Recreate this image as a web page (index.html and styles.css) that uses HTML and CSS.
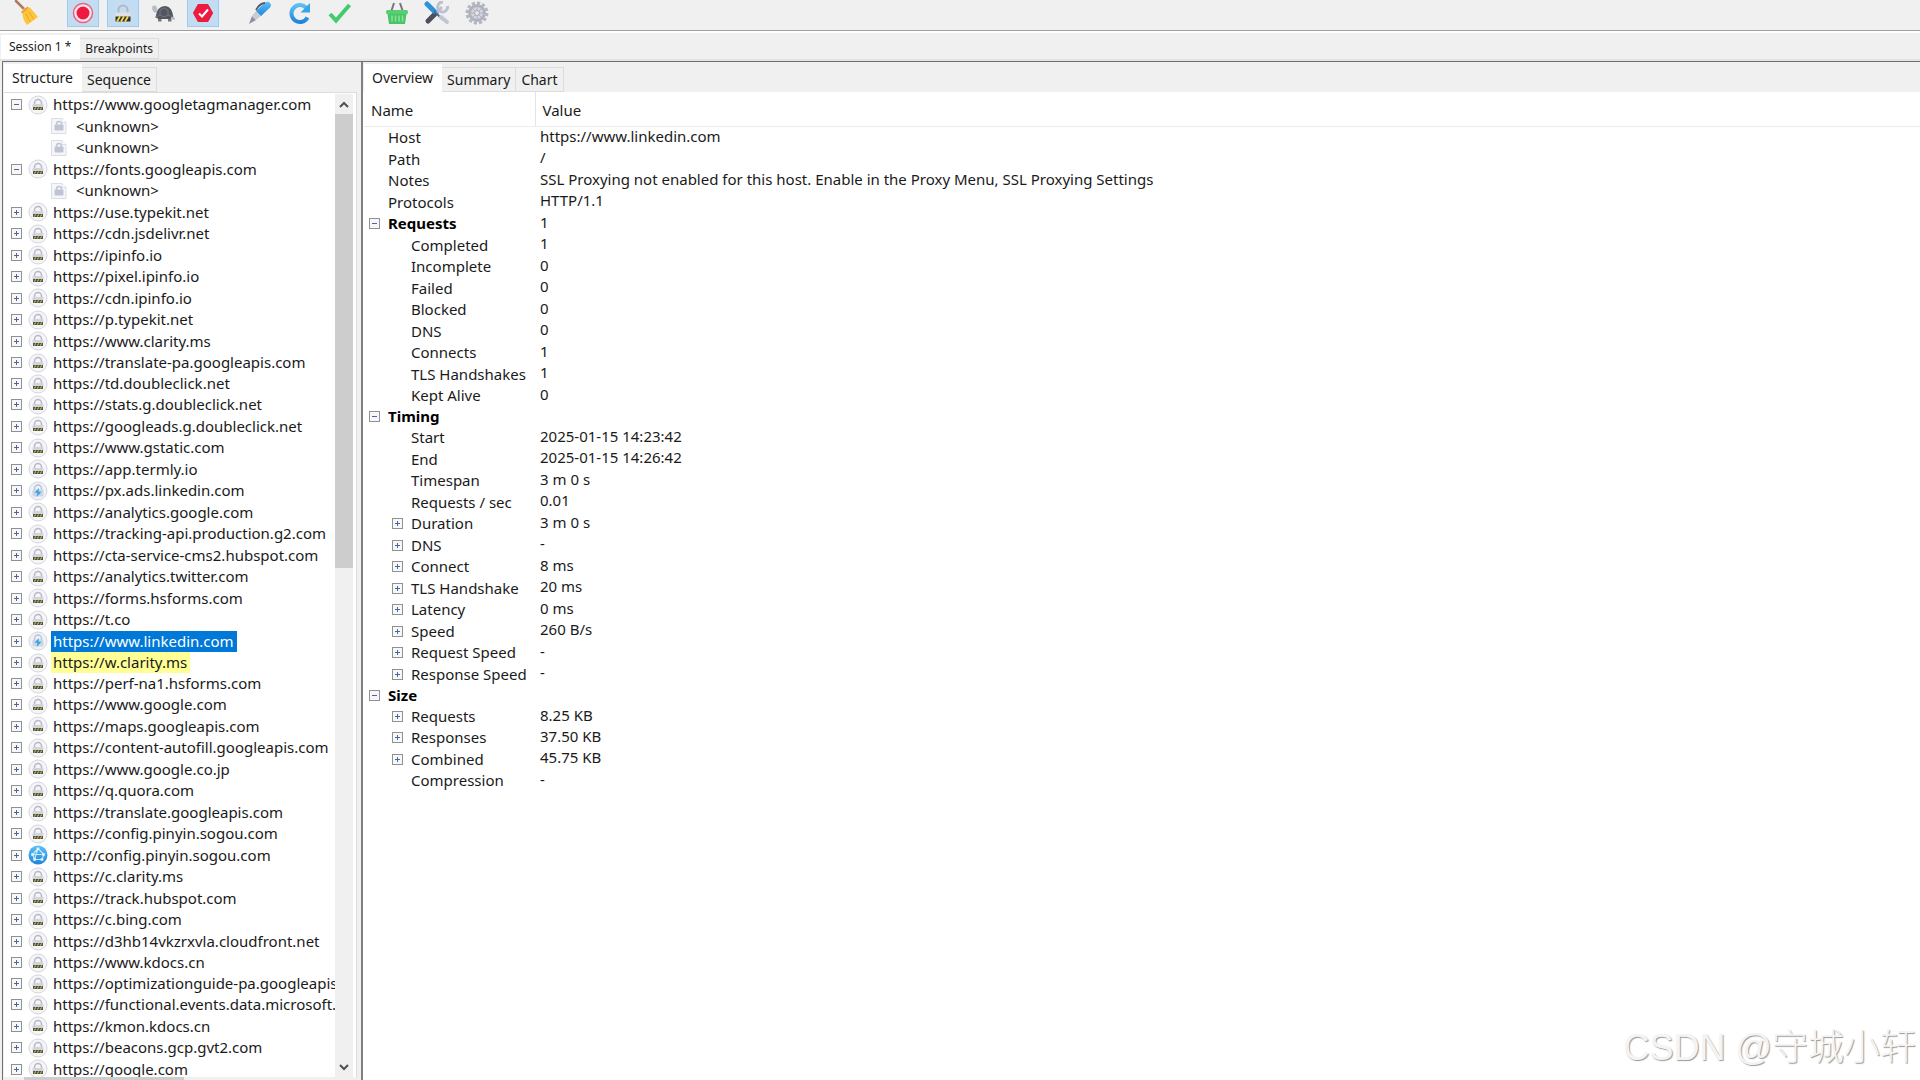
FILE: index.html
```html
<!DOCTYPE html>

<html lang="en">

    <head>
        <meta charset="utf-8">
        <title>Session 1</title>
        <link rel="stylesheet" href="styles.css">
    </head>

    <body>
        <svg class="defs" width="0" height="0">
            <defs>
                <linearGradient id="blue" x1="0" y1="0" x2="0" y2="1">
                    <stop offset="0" stop-color="#5cc0f5"/>
                    <stop offset="1" stop-color="#1f86dc"/>
                </linearGradient>
            </defs>
            <symbol id="host-lock" viewBox="0 0 20 20">
                <circle cx="10" cy="10" r="9" fill="#f5f5f9" stroke="#d5d5e0"/>
                <path d="M6.500 9.500V8a3.500 3.500 0 0 1 7 0v1.500" fill="none" stroke="#b6b9c4" stroke-width="1.500"/>
                <rect x="4.500" y="9" width="11" height="3.500" rx="1" fill="#d2d4dc"/>
                <rect x="5" y="12" width="10" height="3" fill="#55553a"/>
                <path d="M6.500 14.500l1-2M9.500 14.500l1-2M12.500 14.500l1-2" stroke="#e0dc78"/>
            </symbol>
            <symbol id="host-bolt" viewBox="0 0 20 20">
                <circle cx="10" cy="10" r="9" fill="#f1f2f7" stroke="#d3d5e2"/>
                <path d="M6.500 9V7.500a3.500 3.500 0 0 1 7 0V9" fill="none" stroke="#b9c3d2" stroke-width="1.500"/>
                <rect x="4.500" y="8.500" width="11" height="7" rx="1.500" fill="#cdd5e1"/>
                <path d="M11 7l-4.500 4.800h3L8.500 16l5-5.200h-3z" fill="#2ea3ec"/>
            </symbol>
            <symbol id="host-globe" viewBox="0 0 20 20">
                <circle cx="10" cy="10" r="9.500" fill="url(#blue)"/>
                <path d="M10 3.500L4.500 9.500L6.500 14.500H14L16 9.500ZM4.500 9.500H16M10 3.500L6.500 14.500" fill="none" stroke="#c6e8fb" stroke-width="1.200"/>
                <path d="M8.700 2.500h2.600v2.600H8.700zM3.200 8.200h2.600v2.600H3.200zM14.200 8.200h2.600v2.600h-2.600zM5.200 13.200h2.600v2.600H5.200zM12.700 13.200h2.600v2.600h-2.600z" fill="#e4f5ff"/>
            </symbol>
            <symbol id="file-lock" viewBox="0 0 16 16">
                <path d="M.5 .5h10.500l4 4v11H.5z" fill="#f6f6fa" stroke="#dcdce6"/>
                <path d="M11 .5v4h4" fill="#fff" stroke="#dcdce6"/>
                <path d="M5.500 8V6a2.500 2.500 0 0 1 5 0v2" fill="none" stroke="#c0c4d2" stroke-width="1.500"/>
                <rect x="3.500" y="6.500" width="9" height="6" rx="1" fill="#bfc4d3"/>
            </symbol>
        </svg>

        <div class="toolbar">
            <button class="tool" aria-label="Clear session">
                <svg width="26" height="26" viewBox="0 0 26 26">
                    <path d="M3 1L13 11" stroke="#b07a5a" stroke-width="2.500" stroke-linecap="round"/>
                    <path d="M10.500 8.500L17 7.500L25 17L14 25Q9 19 9.500 12Z" fill="#fcc63c"/>
                    <path d="M13 14L17 22M16 12L21 19.500" stroke="#eda628"/>
                    <path d="M8.500 12.500Q12 11 15 7" stroke="#f39a3c" stroke-width="2" fill="none"/>
                </svg>
            </button>
            <div class="tool-group">
                <button class="tool pressed" aria-label="Record">
                    <svg width="22" height="22" viewBox="0 0 22 22">
                        <circle cx="11" cy="11" r="9.500" fill="#fbe8ee" stroke="#f06080" stroke-width="1.500"/>
                        <circle cx="11" cy="11" r="6.500" fill="#f0193f"/>
                    </svg>
                </button>
                <button class="tool pressed" aria-label="SSL proxying">
                    <svg width="18" height="20" viewBox="0 0 18 20">
                        <path d="M4.500 11V7a4.500 4.500 0 0 1 9 0v4" fill="none" stroke="#b4b8c4" stroke-width="2"/>
                        <rect x="1.500" y="9.500" width="15" height="9" rx="1" fill="#dfe1e8"/>
                        <rect x="1.500" y="13.500" width="15" height="5" fill="#303028"/>
                        <path d="M3 18.500l3-5M7 18.500l3-5M11 18.500l3-5" stroke="#f6da4c" stroke-width="1.800"/>
                    </svg>
                </button>
                <button class="tool" aria-label="Throttling">
                    <svg width="24" height="18" viewBox="0 0 24 18">
                        <path d="M7 14v3.500h3.500V14M17 14v3.500h3.500V14" fill="#74777f"/>
                        <path d="M5 8Q3 10 1.500 6Q0 1.500 3.500 1.500Q6 1.500 6 5L8 10z" fill="#b8bcc8"/>
                        <path d="M4.500 13.500Q6 2 14 2Q21 2 22.500 13.500L20 15H8z" fill="#53565e"/>
                        <path d="M9 6l4-2 4 2v5l-4 2-4-2zM4.500 13L9 11M17 11l5 2" fill="none" stroke="#74777f"/>
                        <path d="M20 14l4 1" stroke="#b8bcc8" stroke-width="2"/>
                    </svg>
                </button>
                <button class="tool pressed" aria-label="Breakpoints">
                    <svg width="20" height="20" viewBox="0 0 20 20">
                        <path d="M5.500 2h9L19 10l-4.500 8h-9L1 10z" fill="#ec1c40" stroke="#ec1c40" stroke-width="2" stroke-linejoin="round"/>
                        <path d="M6 10.500l3 3 6-7" fill="none" stroke="#fff" stroke-width="2"/>
                    </svg>
                </button>
            </div>
            <div class="tool-group">
                <button class="tool" aria-label="Compose">
                    <svg width="24" height="24" viewBox="0 0 24 24">
                        <path d="M1 23l3-8 4 4z" fill="#8d92a0"/>
                        <path d="M4 15L8 10l5 5-5 4z" fill="#c8ccd8"/>
                        <path d="M8 10L17 1.500q3-1.500 5 .5t0 4.500L13 15z" fill="url(#blue)"/>
                        <path d="M8 9Q12 2 17 2" fill="none" stroke="#555b68" stroke-width="1.800"/>
                    </svg>
                </button>
                <button class="tool" aria-label="Repeat">
                    <svg width="24" height="24" viewBox="0 0 24 24">
                        <path d="M19.500 16.500A8.500 8.500 0 1 1 18 6.500" fill="none" stroke="url(#blue)" stroke-width="4"/>
                        <path d="M22 2v9.500h-9.500z" fill="#3ba4ea"/>
                    </svg>
                </button>
                <button class="tool" aria-label="Validate">
                    <svg width="24" height="22" viewBox="0 0 24 22">
                        <path d="M2 12l6 6.500L21.500 3" fill="none" stroke="#42cb6c" stroke-width="4"/>
                    </svg>
                </button>
            </div>
            <div class="tool-group">
                <button class="tool" aria-label="Purchase">
                    <svg width="24" height="24" viewBox="0 0 24 24">
                        <path d="M6 11L9 2M18 11L15 2" stroke="#77747a" stroke-width="2"/>
                        <rect x="1" y="9" width="22" height="4" rx="1.500" fill="#55cf70"/>
                        <path d="M2.500 13h19L20 23H4z" fill="#48c665"/>
                        <path d="M7 14.500v6M10.500 14.500v6M14 14.500v6M17.500 14.500v6" stroke="#8be49a" stroke-width="1.500"/>
                    </svg>
                </button>
                <button class="tool" aria-label="Tools">
                    <svg width="26" height="24" viewBox="0 0 26 24">
                        <path d="M4 20l8-8" stroke="#4b4f59" stroke-width="5" stroke-linecap="round"/>
                        <path d="M12 12l6-6" stroke="#bcc1cf" stroke-width="3"/>
                        <path d="M23.500 5A5 5 0 1 1 19 1" fill="none" stroke="#bcc1cf" stroke-width="3"/>
                        <path d="M3 3l7 7" stroke="#2b94dc" stroke-width="5" stroke-linecap="round"/>
                        <path d="M10 10l8 8" stroke="#3d6f98" stroke-width="2"/>
                        <path d="M17 16l6 5" stroke="#c3c6d2" stroke-width="4" stroke-linecap="round"/>
                    </svg>
                </button>
                <button class="tool" aria-label="Settings">
                    <svg width="24" height="24" viewBox="0 0 24 24">
                        <circle cx="12" cy="12" r="10" fill="none" stroke="#b4b6c2" stroke-width="3" stroke-dasharray="3.200 2"/>
                        <circle cx="12" cy="12" r="7.500" fill="#d4d6de" stroke="#b0b3be" stroke-width="3"/>
                        <path d="M12 5v14M5 12h14M7 7l10 10M17 7L7 17" stroke="#b0b3be"/>
                        <circle cx="12" cy="12" r="2.500" fill="#e6e7ec" stroke="#a5a8b5"/>
                    </svg>
                </button>
            </div>
        </div>

        <div class="tabs session-tabs" role="tablist">
            <button class="tab active" role="tab" aria-selected="true">Session 1 *</button>
            <button class="tab" role="tab">Breakpoints</button>
        </div>

        <div class="panes">
            <div class="side">
                <div class="tabs" role="tablist">
                    <button class="tab active" role="tab" aria-selected="true">Structure</button>
                    <button class="tab" role="tab">Sequence</button>
                </div>
                <div class="tree-box">
                    <ul class="tree" id="tree"></ul>
                    <div class="vscroll">
                        <button class="arrow" aria-label="Scroll up">
                            <svg width="10" height="7" viewBox="0 0 10 7"><path d="M1 6l4-4 4 4" fill="none" stroke="#505050" stroke-width="2"/></svg>
                        </button>
                        <div class="vthumb"></div>
                        <div class="vtrack"></div>
                        <button class="arrow" aria-label="Scroll down">
                            <svg width="10" height="7" viewBox="0 0 10 7"><path d="M1 1l4 4 4-4" fill="none" stroke="#505050" stroke-width="2"/></svg>
                        </button>
                    </div>
                </div>
                <div class="hscroll"><div class="hthumb"></div></div>
            </div>

            <div class="detail">
                <div class="tabs" role="tablist">
                    <button class="tab active" role="tab" aria-selected="true">Overview</button>
                    <button class="tab" role="tab">Summary</button>
                    <button class="tab" role="tab">Chart</button>
                </div>
                <table class="overview">
                    <thead>
                        <tr><th class="name">Name</th><th>Value</th></tr>
                    </thead>
                    <tbody id="overview"></tbody>
                </table>
            </div>
        </div>

        <div class="watermark">CSDN @守城小轩</div>

        <script src="script.js"></script>
    </body>

</html>
```
FILE: styles.css
```css
* {
    box-sizing: border-box;
}
body {
    display: flex;
    flex-direction: column;
    height: 100vh;
    margin: 0;
    overflow: hidden;
    background-color: #f0f0f0;
    color: #1a1a1a;
    font-family: "Noto Sans", "Noto Sans CJK SC", sans-serif;
    font-size: 15px;
}
button {
    padding: 0;
    border: 0;
    background: none;
    color: inherit;
    font: inherit;
}
.defs {
    position: absolute;
}

/* toolbar */
.toolbar {
    display: flex;
    gap: 25px;
    height: 33px;
    padding-left: 10px;
    border-bottom: 2px solid #fff;
    box-shadow: inset 0 -1px #a0a0a0;
}
.tool-group {
    display: flex;
    gap: 8px;
}
.tool {
    display: flex;
    align-items: center;
    justify-content: center;
    width: 32px;
    height: 27px;
    padding-bottom: 1px;
}
.pressed {
    border: 1px solid #9fcbee;
    border-top: 0;
    background-color: #c2dcf2;
}

/* tabs */
.tabs {
    display: flex;
    align-items: flex-end;
    height: 28px;
    font-size: 14px;
}
.tab {
    height: 25px;
    padding: 0 5px;
    border: 1px solid #dcdcdc;
    border-left: 0;
    line-height: 24px;
    white-space: nowrap;
}
.tab.active {
    height: 28px;
    padding: 0 8px;
    border-color: #fff;
    background-color: #fff;
}
.session-tabs {
    padding: 2px 0 0 1px;
    border-bottom: 2px solid #e4e4e4;
    font-size: 12px;
}
.session-tabs .tab {
    height: 21px;
    line-height: 20px;
}
.session-tabs .tab.active {
    height: 24px;
}

/* panes */
.panes {
    display: flex;
    flex: 1;
    min-height: 0;
    margin-left: 2px;
    border: solid #707070;
    border-width: 1px 0 0 1px;
}
.side {
    display: flex;
    flex-direction: column;
    width: 358px;
    padding: 2px 4px 0 1px;
}
.tree-box {
    display: flex;
    flex: 1;
    min-height: 0;
    padding: 1px 3px 0 0;
    border: solid #dcdcdc;
    border-width: 1px 1px 0 0;
    background-color: #fff;
}
.tree {
    flex: 1;
    min-width: 0;
    margin: 0;
    padding: 0 0 0 7px;
    overflow: hidden;
    list-style: none;
}
.tree li {
    display: flex;
    align-items: center;
    gap: 3px;
    white-space: nowrap;
}
.tree li.child {
    gap: 7px;
    padding-left: 40px;
}
.tree svg {
    flex: none;
}
.tree .toggle {
    margin-right: 3px;
}

/* rows average a little under 21.5px */
.tree li, .overview tbody tr {
    height: 21px;
}
.tree li:nth-child(even), .overview tbody tr:nth-child(even) {
    height: 22px;
}
.tree li:nth-child(14n), .overview tbody tr:nth-child(14n) {
    height: 21px;
}

.label {
    padding: 0 3px 0 2px;
    line-height: 21px;
}
.selected {
    background-color: #0078d7;
    color: #fff;
}
.marked {
    background-color: #ffff96;
}
.toggle {
    display: block;
    flex: none;
    width: 11px;
    height: 11px;
    border: 1px solid #919191;
    background: linear-gradient(#4b63a7, #4b63a7) center / 5px 1px no-repeat, #f7f7f7;
}
.toggle.plus {
    background: linear-gradient(#4b63a7, #4b63a7) center / 5px 1px no-repeat, linear-gradient(#4b63a7, #4b63a7) center / 1px 5px no-repeat, #f7f7f7;
}

/* scrollbars */
.vscroll {
    display: flex;
    flex-direction: column;
    width: 18px;
    background-color: #f0f0f0;
}
.arrow {
    display: flex;
    align-items: center;
    justify-content: center;
    height: 20px;
}
.vthumb {
    flex: 455;
    background-color: #cdcdcd;
}
.vtrack {
    flex: 490;
}
.hscroll {
    height: 3px;
    padding-left: 20px;
    background-color: #f0f0f0;
}
.hthumb {
    width: 48%;
    height: 3px;
    background-color: #cdcdcd;
}

/* overview */
.detail {
    flex: 1;
    min-width: 0;
    padding: 2px 0 0 1px;
    border-left: 2px solid #808080;
    background: linear-gradient(#f0f0f0, #f0f0f0) top / 100% 30px no-repeat, #fff;
}
.overview {
    width: 100%;
    border-collapse: collapse;
}
.overview th {
    height: 34px;
    padding: 2px 0 0 7px;
    border-bottom: 1px solid #ececec;
    font-weight: 400;
    text-align: left;
}
.overview th.name {
    width: 171px;
    border-right: 1px solid #e4e4e4;
}
.overview td {
    padding: 0 0 2px 5px;
    line-height: 19px;
}
.overview .key {
    padding: 1px 0 0 5px;
}
.key div {
    display: flex;
    align-items: center;
    gap: 8px;
    padding-left: 19px;
    white-space: nowrap;
}
.key .section {
    padding-left: 0;
    color: #000;
    font-weight: 700;
}
.key .leaf {
    padding-left: 42px;
}
.key .branch {
    padding-left: 23px;
}

.watermark {
    position: absolute;
    right: 4px;
    bottom: 8px;
    color: #f4f4f4;
    font-family: "Liberation Sans", "Noto Sans CJK SC", sans-serif;
    font-size: 36px;
    font-weight: 300;
    line-height: 48px;
    text-shadow: 1px 1px 1px #999;
}
```
FILE: script.js
```js
// "-" open host, ">" child, "b" bolt icon, "g" globe icon
const hosts = [
    ["-", "https://www.googletagmanager.com"],
    [">", "<unknown>"],
    [">", "<unknown>"],
    ["-", "https://fonts.googleapis.com"],
    [">", "<unknown>"],
    ["", "https://use.typekit.net"],
    ["", "https://cdn.jsdelivr.net"],
    ["", "https://ipinfo.io"],
    ["", "https://pixel.ipinfo.io"],
    ["", "https://cdn.ipinfo.io"],
    ["", "https://p.typekit.net"],
    ["", "https://www.clarity.ms"],
    ["", "https://translate-pa.googleapis.com"],
    ["", "https://td.doubleclick.net"],
    ["", "https://stats.g.doubleclick.net"],
    ["", "https://googleads.g.doubleclick.net"],
    ["", "https://www.gstatic.com"],
    ["", "https://app.termly.io"],
    ["b", "https://px.ads.linkedin.com"],
    ["", "https://analytics.google.com"],
    ["", "https://tracking-api.production.g2.com"],
    ["", "https://cta-service-cms2.hubspot.com"],
    ["", "https://analytics.twitter.com"],
    ["", "https://forms.hsforms.com"],
    ["", "https://t.co"],
    ["b", "https://www.linkedin.com", "selected"],
    ["", "https://w.clarity.ms", "marked"],
    ["", "https://perf-na1.hsforms.com"],
    ["", "https://www.google.com"],
    ["", "https://maps.googleapis.com"],
    ["", "https://content-autofill.googleapis.com"],
    ["", "https://www.google.co.jp"],
    ["", "https://q.quora.com"],
    ["", "https://translate.googleapis.com"],
    ["", "https://config.pinyin.sogou.com"],
    ["g", "http://config.pinyin.sogou.com"],
    ["", "https://c.clarity.ms"],
    ["", "https://track.hubspot.com"],
    ["", "https://c.bing.com"],
    ["", "https://d3hb14vkzrxvla.cloudfront.net"],
    ["", "https://www.kdocs.cn"],
    ["", "https://optimizationguide-pa.googleapis.com"],
    ["", "https://functional.events.data.microsoft.com"],
    ["", "https://kmon.kdocs.cn"],
    ["", "https://beacons.gcp.gvt2.com"],
    ["", "https://google.com"]
];

const rows = [
    ["top", "Host", "https://www.linkedin.com"],
    ["top", "Path", "/"],
    ["top", "Notes", "SSL Proxying not enabled for this host. Enable in the Proxy Menu, SSL Proxying Settings"],
    ["top", "Protocols", "HTTP/1.1"],
    ["section", "Requests", "1"],
    ["leaf", "Completed", "1"],
    ["leaf", "Incomplete", "0"],
    ["leaf", "Failed", "0"],
    ["leaf", "Blocked", "0"],
    ["leaf", "DNS", "0"],
    ["leaf", "Connects", "1"],
    ["leaf", "TLS Handshakes", "1"],
    ["leaf", "Kept Alive", "0"],
    ["section", "Timing", ""],
    ["leaf", "Start", "2025-01-15 14:23:42"],
    ["leaf", "End", "2025-01-15 14:26:42"],
    ["leaf", "Timespan", "3 m 0 s"],
    ["leaf", "Requests / sec", "0.01"],
    ["branch", "Duration", "3 m 0 s"],
    ["branch", "DNS", "-"],
    ["branch", "Connect", "8 ms"],
    ["branch", "TLS Handshake", "20 ms"],
    ["branch", "Latency", "0 ms"],
    ["branch", "Speed", "260 B/s"],
    ["branch", "Request Speed", "-"],
    ["branch", "Response Speed", "-"],
    ["section", "Size", ""],
    ["branch", "Requests", "8.25 KB"],
    ["branch", "Responses", "37.50 KB"],
    ["branch", "Combined", "45.75 KB"],
    ["leaf", "Compression", "-"]
];

function toggle(open) {
    return open
        ? '<button class="toggle" aria-label="Collapse"></button>'
        : '<button class="toggle plus" aria-label="Expand"></button>';
}
function icon(name, size) {
    return `<svg width="${size}" height="${size}"><use href="#${name}"/></svg>`;
}

const tree = document.getElementById("tree");
for(const [kind, url, state] of hosts) {
    const item = document.createElement("li");
    if(kind === ">") {
        item.className = "child";
        item.innerHTML = icon("file-lock", 16);
    } else {
        const name = { b: "host-bolt", g: "host-globe" }[kind] || "host-lock";
        item.innerHTML = toggle(kind === "-") + icon(name, 20);
    }
    const label = document.createElement("span");
    label.className = "label " + (state || "");
    label.textContent = url;
    item.appendChild(label);
    tree.appendChild(item);
}

const overview = document.getElementById("overview");
for(const [kind, name, value] of rows) {
    const button = kind === "section" ? toggle(true) : kind === "branch" ? toggle(false) : "";
    const row = document.createElement("tr");
    row.innerHTML = `<td class="key"><div class="${kind}">${button}${name}</div></td><td>${value}</td>`;
    overview.appendChild(row);
}
```
